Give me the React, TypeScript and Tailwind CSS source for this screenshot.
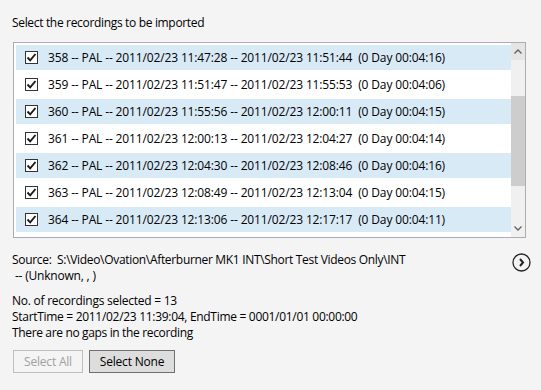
import React from "react";

const rows = [
  ["358", "2011/02/23 11:47:28", "2011/02/23 11:51:44", "00:04:16"],
  ["359", "2011/02/23 11:51:47", "2011/02/23 11:55:53", "00:04:06"],
  ["360", "2011/02/23 11:55:56", "2011/02/23 12:00:11", "00:04:15"],
  ["361", "2011/02/23 12:00:13", "2011/02/23 12:04:27", "00:04:14"],
  ["362", "2011/02/23 12:04:30", "2011/02/23 12:08:46", "00:04:16"],
  ["363", "2011/02/23 12:08:49", "2011/02/23 12:13:04", "00:04:15"],
  ["364", "2011/02/23 12:13:06", "2011/02/23 12:17:17", "00:04:11"],
];

function Check() {
  return (
    <div className="w-[13px] h-[13px] border border-[#333333] bg-white flex items-center justify-center shrink-0">
      <svg width="11" height="11" viewBox="0 0 11 11">
        <path d="M1.5 5.5 L4.2 8.3 L9.5 2" fill="none" stroke="#1a1a1a" strokeWidth="1.9" />
      </svg>
    </div>
  );
}

export default function App() {
  return (
    <div
      className="w-[541px] h-[390px] bg-[#F4F4F4] text-[12px] leading-[16px] text-black overflow-hidden"
      style={{ fontFamily: '"Open Sans", "Noto Sans", sans-serif' }}
    >
      <div className="pt-[15px] pl-[12px] h-[42px] tracking-[-0.33px]">Select the recordings to be imported</div>
      <div className="ml-[13px] w-[513px] h-[196px] border border-[#ABADB3] bg-white flex">
        <div className="flex-1 pt-[2px] pl-[2px] flex flex-col gap-[2px]">
          {rows.map((r, i) => (
            <div
              key={r[0]}
              className={`h-[25px] flex items-center pl-[9px] ${i % 2 === 0 ? "bg-[#D9EAF7]" : "bg-white"}`}
            >
              <Check />
              <span className="ml-[10px] whitespace-pre tracking-[-0.14px]">
                {`${r[0]} -- PAL -- ${r[1]} -- ${r[2]}  (0 Day ${r[3]})`}
              </span>
            </div>
          ))}
        </div>
        <div className="w-[14px] bg-[#F0F0F0] flex flex-col items-center">
          <div className="h-[17px] w-full flex items-center justify-center bg-[#E5E5E5]">
            <svg width="8" height="5" viewBox="0 0 8 5">
              <path d="M0.5 4.5 L4 1 L7.5 4.5" fill="none" stroke="#606060" strokeWidth="1.3" />
            </svg>
          </div>
          <div className="h-[36px]" />
          <div className="w-full h-[90px] bg-[#CDCDCD]" />
          <div className="flex-1" />
          <div className="h-[17px] w-full flex items-center justify-center">
            <svg width="8" height="5" viewBox="0 0 8 5">
              <path d="M0.5 0.5 L4 4 L7.5 0.5" fill="none" stroke="#606060" strokeWidth="1.3" />
            </svg>
          </div>
        </div>
      </div>
      <div className="mt-[14px] pl-[12px] pr-[10px] flex items-start justify-between">
        <div>
          <div className="whitespace-pre tracking-[-0.32px]">{"Source:  S:\\Video\\Ovation\\Afterburner MK1 INT\\Short Test Videos Only\\INT"}</div>
          <div className="whitespace-pre tracking-[-0.2px]">{" -- (Unknown, , )"}</div>
        </div>
        <svg width="19" height="19" viewBox="0 0 19 19" className="mt-[1px]">
          <circle cx="9.5" cy="9.5" r="8.5" fill="none" stroke="#222" strokeWidth="1.3" />
          <path d="M8 6 L11 9.5 L8 13" fill="none" stroke="#222" strokeWidth="2" />
        </svg>
      </div>
      <div className="mt-[9px] pl-[12px]">
        <div className="tracking-[-0.25px]">No. of recordings selected = 13</div>
        <div className="tracking-[-0.3px]">StartTime = 2011/02/23 11:39:04, EndTime = 0001/01/01 00:00:00</div>
        <div className="tracking-[-0.35px]">There are no gaps in the recording</div>
      </div>
      <div className="mt-[9px] pl-[13px] flex gap-[6px] tracking-[-0.2px]">
        <div className="w-[70px] h-[23px] border border-[#BFBFBF] bg-[#F4F4F4] text-[#A0A0A0] flex items-center justify-center">
          Select All
        </div>
        <div className="w-[86px] h-[23px] border border-[#707070] bg-[#DDDDDD] flex items-center justify-center">
          Select None
        </div>
      </div>
    </div>
  );
}
